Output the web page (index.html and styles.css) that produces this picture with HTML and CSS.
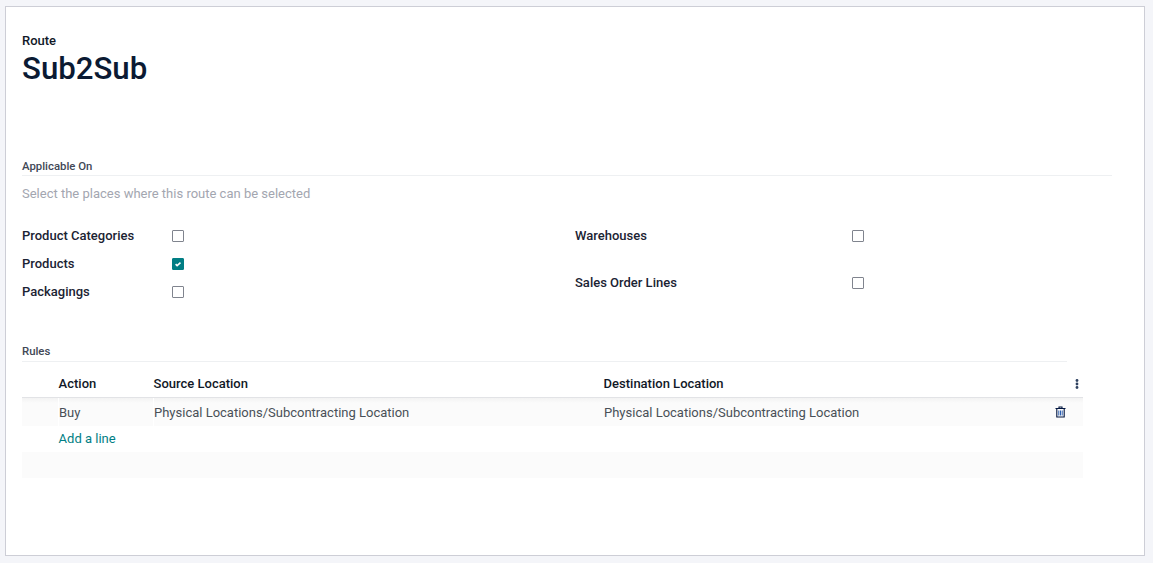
FILE: index.html
```html
<!DOCTYPE html>
<html lang="en">
<head>
<meta charset="utf-8">
<title>Sub2Sub</title>
<link rel="stylesheet" href="styles.css">
</head>
<body>
<main class="sheet">
  <header class="title-block">
    <div class="title-label">Route</div>
    <h1 class="title">Sub2Sub</h1>
  </header>

  <section class="applicable">
    <h2 class="section-head">Applicable On</h2>
    <p class="hint">Select the places where this route can be selected</p>
    <div class="columns">
      <div class="col col-left">
        <div class="field"><span class="field-label">Product Categories</span><span class="check"></span></div>
        <div class="field"><span class="field-label">Products</span>
          <span class="check checked"><svg viewBox="0 0 12 12" width="12" height="12"><path d="M3.6 6.2 5.1 7.6 8.5 4.6" fill="none" stroke="#fff" stroke-width="1.6"/></svg></span>
        </div>
        <div class="field"><span class="field-label">Packagings</span><span class="check"></span></div>
      </div>
      <div class="col col-right">
        <div class="field"><span class="field-label">Warehouses</span><span class="check"></span></div>
        <div class="field field-tall"><span class="field-label">Sales Order Lines</span><span class="check"></span></div>
      </div>
    </div>
  </section>

  <section class="rules">
    <h2 class="section-head rules-head">Rules</h2>
    <div class="table">
      <div class="row row-head">
        <div class="c-handle"></div>
        <div class="c-action">Action</div>
        <div class="c-source">Source Location</div>
        <div class="c-dest">Destination Location</div>
        <div class="c-end">
          <svg class="kebab" viewBox="0 0 4 10" width="4" height="10"><circle cx="2" cy="1.5" r="1.4"/><circle cx="2" cy="5" r="1.4"/><circle cx="2" cy="8.5" r="1.4"/></svg>
        </div>
      </div>
      <div class="row row-data">
        <div class="c-handle"></div>
        <div class="c-action">Buy</div>
        <div class="c-source">Physical Locations/Subcontracting Location</div>
        <div class="c-dest">Physical Locations/Subcontracting Location</div>
        <div class="c-end">
          <svg class="trash" viewBox="0 0 11 12" width="11" height="12"><path d="M4 2V1h3v1M.5 2.5h10M1.8 2.5V11h7.4V2.5" fill="none" stroke="#01153f" stroke-width="1.1"/><path d="M3.8 4.5v5M5.5 4.5v5M7.2 4.5v5" fill="none" stroke="#2a5db0" stroke-width="1"/></svg>
        </div>
      </div>
      <div class="row row-add">
        <div class="c-handle"></div>
        <a class="add-line" href="#">Add a line</a>
      </div>
      <div class="row-empty"></div>
    </div>
  </section>
</main>
</body>
</html>
```
FILE: styles.css
```css
* { box-sizing: border-box; }
html, body { margin: 0; height: 100%; }
body {
  background: #f4f5f9;
  padding: 6px 8px 7px 5px;
  font-family: Roboto, "Liberation Sans", sans-serif;
  font-size: 13px;
  color: #374151;
  overflow: hidden;
}
.sheet {
  height: 550px;
  background: #fff;
  border: 1px solid #cdced6;
  padding: 26px 32px 0 16px;
}
.title-block { height: 126px; }
.title-label { font-size: 13px; font-weight: 500; line-height: 15px; color: #111827; }
.title {
  margin: 2px 0 0;
  font-size: 31.2px;
  font-weight: 500;
  line-height: 38px;
  color: #0b1a33;
}
.section-head {
  margin: 0;
  font-size: 11.375px;
  font-weight: 500;
  line-height: 15px;
  height: 17px;
  color: #414856;
  border-bottom: 1px solid #eef0f2;
}
.hint { margin: 10px 0 0; font-size: 13px; line-height: 16px; color: #a3a6b0; }
.columns { display: flex; margin-top: 20px; }
.col-left { width: 553px; }
.col-right { flex: 1; }
.field { display: flex; align-items: center; height: 28px; }
.field-tall { height: 66px; }
.field-label { font-weight: 500; color: #1b2333; padding-bottom: 2px; }
.col-left .field-label { width: 150px; }
.col-right .field-label { width: 277px; }
.check {
  width: 12px;
  height: 12px;
  border: 1px solid #80848e;
  border-radius: 1px;
  background: #fff;
  display: block;
}
.checked { background: #017e84; border-color: #017e84; }
.checked svg { display: block; margin: -1px; }
.rules { margin-top: 28px; width: 1061px; }
.rules-head { width: 1045px; height: 18px; }
.table { display: flex; flex-direction: column; }
.row { display: flex; align-items: center; }
.c-handle { width: 37px; align-self: stretch; flex: none; }
.c-action { width: 95px; flex: none; }
.c-source { width: 450px; flex: none; }
.c-dest { flex: 1; }
.c-end { width: 30px; flex: none; display: flex; justify-content: center; align-items: center; }
.row-head {
  height: 36px;
  padding-top: 7px;
  font-weight: 500;
  color: #111827;
  border-bottom: 1px solid #e2e3e6;
}
.row-head .c-handle { width: 36.6px; }
.kebab { fill: #2f4260; display: block; margin: 2px 0 0 17px; }
.row-data {
  height: 28px;
  background: linear-gradient(#f3f3f3, #fbfbfb 5px);
  color: #495057;
}
.row-data .c-handle,
.row-data .c-action { border-right: 1px solid #fff; align-self: stretch; display: flex; align-items: center; }
.trash { display: block; margin-left: -15px; }
.row-add { height: 26px; padding-bottom: 2px; }
.row-add .c-handle { width: 36.6px; }
.add-line { color: #017e84; text-decoration: none; }
.row-empty { height: 26px; background: #fbfbfb; }
```
